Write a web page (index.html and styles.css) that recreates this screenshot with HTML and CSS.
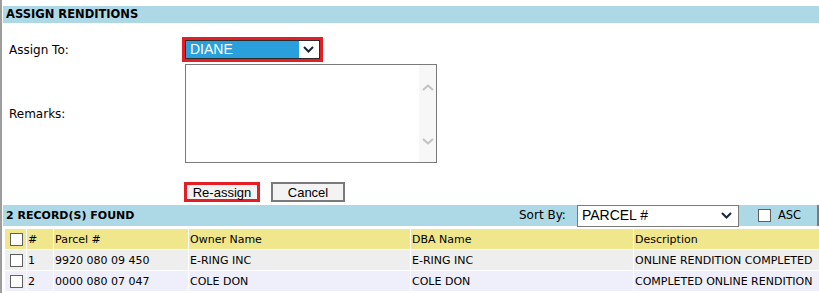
FILE: index.html
```html
<!DOCTYPE html>
<html lang="en">
<head>
  <meta charset="UTF-8">
  <title>Assign Renditions</title>
  <link rel="stylesheet" href="styles.css">
</head>
<body>
  <div class="page">
    <div class="crumb"></div>
    <div class="band">ASSIGN RENDITIONS</div>

    <div class="form">
      <div class="field">
        <label>Assign To:</label>
        <div class="pick">
          <div class="select">
            <span class="chosen">DIANE</span>
            <svg class="chev" width="11" height="7" viewBox="0 0 11 7"><polyline points="1,1 5.5,5.5 10,1" fill="none" stroke="#1b2538" stroke-width="2"/></svg>
          </div>
        </div>
      </div>
      <div class="field remarks">
        <label>Remarks:</label>
        <div class="textarea">
          <div class="scroll">
            <svg width="12" height="7" viewBox="0 0 12 7"><polyline points="1,6 6,1.5 11,6" fill="none" stroke="#c2c2c2" stroke-width="2"/></svg>
            <svg width="12" height="7" viewBox="0 0 12 7"><polyline points="1,1 6,5.5 11,1" fill="none" stroke="#c2c2c2" stroke-width="2"/></svg>
          </div>
        </div>
      </div>
      <div class="buttons">
        <button class="btn primary">Re-assign</button>
        <button class="btn">Cancel</button>
      </div>
    </div>

    <div class="band records">
      <span class="title">2 RECORD(S) FOUND</span>
      <span class="sort-label">Sort By:</span>
      <div class="sort-select">
        <span>PARCEL #</span>
        <svg class="chev" width="11" height="7" viewBox="0 0 11 7"><polyline points="1,1 5.5,5.5 10,1" fill="none" stroke="#1b2538" stroke-width="2"/></svg>
      </div>
      <span class="box"></span>
      <span class="asc">ASC</span>
      <span class="more"></span>
    </div>

    <table class="grid">
      <colgroup>
        <col class="c-check"><col class="c-num"><col class="c-parcel"><col class="c-owner"><col class="c-dba"><col class="c-desc">
      </colgroup>
      <tr class="head">
        <td><span class="box"></span></td><td>#</td><td>Parcel #</td><td>Owner Name</td><td>DBA Name</td><td>Description</td>
      </tr>
      <tr class="odd">
        <td><span class="box"></span></td><td>1</td><td>9920 080 09 450</td><td>E-RING INC</td><td>E-RING INC</td><td>ONLINE RENDITION COMPLETED</td>
      </tr>
      <tr class="even">
        <td><span class="box"></span></td><td>2</td><td>0000 080 07 047</td><td>COLE DON</td><td>COLE DON</td><td>COMPLETED ONLINE RENDITION</td>
      </tr>
    </table>
  </div>
</body>
</html>
```

FILE: styles.css
```css
body { margin: 0; font-family: "DejaVu Sans", Verdana, sans-serif; font-size: 11px; color: #000; background: #fff; overflow: hidden; }
.page { border-left: 2px solid #9d9d9d; padding-left: 1px; height: 293px; overflow: hidden; }

.crumb { height: 6px; }

.band { background: #add8e6; font-weight: bold; font-size: 11.5px; height: 17px; line-height: 17px; padding-left: 3px; white-space: nowrap; }

.form { padding-top: 14px; }
.field { display: flex; align-items: center; }
.field label { width: 182px; flex-shrink: 0; padding-left: 6px; box-sizing: border-box; font-size: 12px; }
.remarks { margin-top: 2px; }

.pick { border: 3px solid #e31e24; margin-left: -3px; }
.select { width: 135px; height: 19px; box-sizing: border-box; border: 1px solid #2b2b2b; background: #fff; display: flex; align-items: center; }
.chosen { background: #29a0db; color: #fff; font-family: "Liberation Sans", Arial, sans-serif; font-size: 14px; width: 113px; height: 17px; line-height: 17px; padding-left: 4px; box-sizing: border-box; }
.select .chev { margin-left: 4px; }

.textarea { width: 252px; height: 99px; box-sizing: border-box; border: 1px solid #7a7a7a; display: flex; justify-content: flex-end; }
.scroll { width: 17px; background: #f7f7f7; display: flex; flex-direction: column; justify-content: space-between; align-items: center; padding: 19px 0 17px; }

.buttons { display: flex; gap: 11px; margin: 19px 0 0 181px; }
.btn { height: 20px; box-sizing: border-box; background: #f3f3f3; font-family: "Liberation Sans", Arial, sans-serif; font-size: 13px; color: #000; padding: 0; border: 2px solid #7a7a7a; width: 74px; }
.btn.primary { border: 3px solid #e31e24; width: 76px; }

.records { margin-top: 3px; height: 21px; line-height: 21px; font-size: 11px; display: flex; align-items: center; }
.records .title { width: 513px; flex-shrink: 0; }
.sort-label { font-weight: normal; font-size: 12px; flex-shrink: 0; }
.sort-select { margin-left: 11px; width: 162px; height: 22px; flex-shrink: 0; box-sizing: border-box; border: 1px solid #7a7a7a; background: #fff; display: flex; align-items: center; justify-content: space-between; padding: 0 6px 0 4px; font-family: "Liberation Sans", Arial, sans-serif; font-size: 14px; font-weight: normal; }
.records .box { margin-left: 19px; }
.asc { font-weight: normal; font-size: 11.5px; margin-left: 7px; flex-shrink: 0; }
.more { margin-left: 16px; width: 30px; height: 17px; flex-shrink: 0; border: 2px solid #7a7a7a; background: #f3f3f3; }

.box { display: inline-block; width: 13px; height: 13px; box-sizing: border-box; border: 1px solid #5f5f5f; background: #fff; vertical-align: middle; flex-shrink: 0; }

.grid { border-spacing: 1px; margin: 2px 0 0 1px; table-layout: fixed; width: 900px; }
.grid td { height: 20px; padding: 0 0 0 1px; white-space: nowrap; overflow: hidden; }
.grid td:first-child { padding-left: 5px; }
.c-check { width: 21px; }
.c-num { width: 26px; }
.c-parcel { width: 134px; }
.c-owner { width: 221px; }
.c-dba { width: 222px; }
.head td { background: #f0e68c; }
.odd td { background: #eeeeee; }
.even td { background: #efeffb; }
```
